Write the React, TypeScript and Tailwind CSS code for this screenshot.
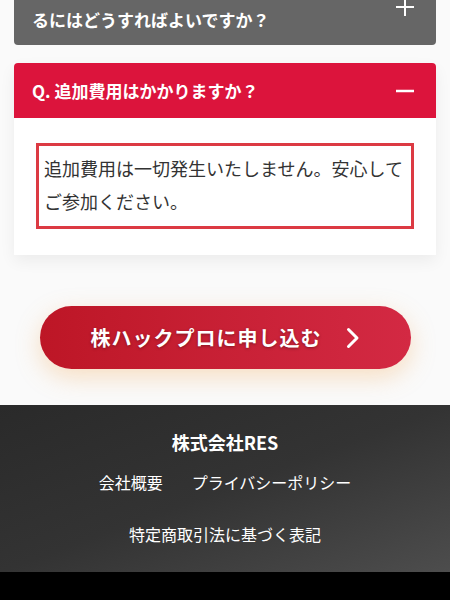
const jp = "font-['Noto_Sans_CJK_JP','Noto_Sans',sans-serif]";

function PlusIcon() {
  return (
    <svg width="18" height="18" viewBox="0 0 18 18" className="shrink-0">
      <path d="M9 0v18M0 9h18" stroke="white" strokeWidth="2" />
    </svg>
  );
}

function MinusIcon() {
  return (
    <svg width="18" height="18" viewBox="0 0 18 18" className="shrink-0">
      <path d="M0 9h18" stroke="white" strokeWidth="2.5" />
    </svg>
  );
}

function Chevron() {
  return (
    <svg width="14" height="22" viewBox="0 0 14 22" className="shrink-0">
      <path
        d="M2.5 2.5 L11 11 L2.5 19.5"
        fill="none"
        stroke="white"
        strokeWidth="3"
        strokeLinecap="round"
        strokeLinejoin="round"
      />
    </svg>
  );
}

export default function App() {
  return (
    <div className={`${jp} h-[600px] overflow-hidden bg-[#fafafa]`}>
      {/* FAQ */}
      <div className="px-[14px]">
        {/* closed item, cut off at the top */}
        <div className="-mt-[40px] flex items-center justify-between rounded-[4px] bg-[#666666] pb-[10px] pt-[15px] pl-[18px] pr-[22px]">
          <p className="text-[17px] font-bold leading-[30px] text-white">
            Q. キャンセルや日程変更をす
            <br />
            るにはどうすればよいですか？
          </p>
          <div className="mt-1">
            <PlusIcon />
          </div>
        </div>

        {/* open item */}
        <div className="mt-[18px] overflow-hidden rounded-t-[4px] bg-white shadow-[0_6px_16px_rgba(0,0,0,0.06)]">
          <div className="flex h-[55px] items-center justify-between bg-[#dc143c] pl-[18px] pr-[22px]">
            <p className="text-[17px] font-bold text-white">
              Q. 追加費用はかかりますか？
            </p>
            <MinusIcon />
          </div>
          <div className="px-[22px] pb-[26px] pt-[25px]">
            <div className="border-[3px] border-[#dc3a43] px-[5px] pb-[8px] pt-[6px]">
              <p className="text-[18px] leading-[33px] text-[#333333]">
                追加費用は一切発生いたしません。安心して
                <br />
                ご参加ください。
              </p>
            </div>
          </div>
        </div>
      </div>

      {/* CTA */}
      <div className="flex justify-center pb-[36px] pt-[51px]">
        <button className="flex h-[63px] w-[371px] items-center justify-center gap-[24px] rounded-full bg-gradient-to-r from-[#bd1626] to-[#d32943] text-white shadow-[0_8px_24px_rgba(240,170,90,0.35)]">
          <span className="text-[20px] font-bold tracking-[0.05em] [text-shadow:0_1px_3px_rgba(0,0,0,0.35)]">
            株ハックプロに申し込む
          </span>
          <Chevron />
        </button>
      </div>

      {/* Footer */}
      <footer className="bg-gradient-to-br from-[#2a2a2a] via-[#333333] to-[#4d4d4d] pb-[24px] pt-[20px] text-center text-white">
        <p className="text-[18px] font-bold leading-[34px]">株式会社RES</p>
        <div className="mt-[9px] flex justify-center gap-[29px] text-[16px] leading-[28px]">
          <a>会社概要</a>
          <a>プライバシーポリシー</a>
        </div>
        <p className="mt-[24px] text-[16px] leading-[28px]">特定商取引法に基づく表記</p>
      </footer>
      <div className="h-[40px] bg-black" />
    </div>
  );
}
